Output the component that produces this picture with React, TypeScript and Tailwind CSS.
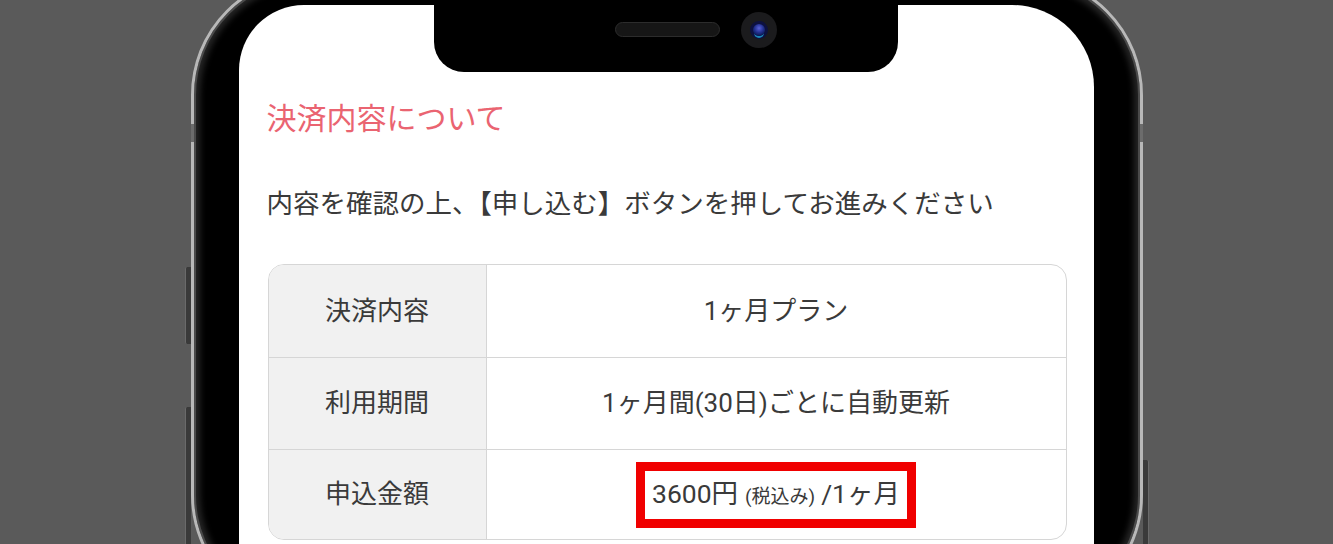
const rows = [
  { label: "決済内容", value: "1ヶ月プラン", h: "h-[92px]" },
  { label: "利用期間", value: "1ヶ月間(30日)ごとに自動更新", h: "h-[91px]" },
];

function PriceCell() {
  return (
    <span className="inline-flex items-baseline border-[9px] border-[#f00000] px-[7px] leading-[45px]">
      <span className="text-[26.5px]">3600円</span>
      <span className="ml-[7px] text-[19px]">(税込み)</span>
      <span className="ml-[6px] text-[26.5px]">/1ヶ月</span>
    </span>
  );
}

export default function App() {
  return (
    <div
      className="flex h-[544px] w-full justify-center overflow-hidden bg-[#5a5a5a]"
      style={{ fontFamily: "Roboto, 'Noto Sans CJK JP', sans-serif" }}
    >
      {/* phone body */}
      <div className="relative mt-[-25px] h-[640px] w-[952px] shrink-0 rounded-[120px] border-[3px] border-[#b8b8b8] bg-black pl-[45px] pr-[46px] pt-[27px] shadow-[inset_0_0_0_2px_#4a4a4a,inset_0_0_6px_6px_#262626]">
        {/* side buttons */}
        <div className="absolute left-[-9px] top-[289px] h-[77px] w-[6px] rounded-l-[2px] bg-[#3a3a3a] border-l border-[#6a6a6a]" />
        <div className="absolute left-[-9px] top-[429px] h-[200px] w-[6px] rounded-l-[2px] bg-[#3a3a3a] border-l border-[#6a6a6a]" />
        <div className="absolute right-[-9px] top-[482px] h-[200px] w-[6px] rounded-r-[2px] bg-[#3a3a3a] border-r border-[#6a6a6a]" />
        <div className="absolute left-[-3px] top-[146px] h-[18px] w-[3px] bg-[#6c6c6c]" />
        <div className="absolute right-[-3px] top-[146px] h-[18px] w-[3px] bg-[#6c6c6c]" />

        {/* screen */}
        <div className="relative h-full rounded-tl-[65px] rounded-tr-[82px] bg-white pl-[28px] text-[#3a3a3a]">
          {/* notch */}
          <div className="absolute left-[195px] top-0 h-[67px] w-[464px] rounded-b-[30px] bg-black">
            <div className="absolute left-[181px] top-[17px] h-[15px] w-[105px] rounded-full border border-[#2c2c2c] bg-[#161616]" />
            <div className="absolute left-[307px] top-[7px] flex h-[36px] w-[36px] items-center justify-center rounded-full bg-[#1b1b1d]">
              <div className="flex h-[18px] w-[18px] items-center justify-center rounded-full bg-[#0d1140]">
                <div className="h-[12px] w-[12px] rounded-full bg-[radial-gradient(circle_at_50%_35%,#5a62d8_0%,#22308f_45%,#0b1a55_75%)] shadow-[0_3px_0_-1px_#1a86b8]" />
              </div>
            </div>
          </div>

          <h2 className="pt-[91px] text-[30px] font-normal leading-[45px] text-[#ea6471]">
            決済内容について
          </h2>
          <p className="mt-[43px] text-[26.5px] leading-[40px]">
            内容を確認の上、【申し込む】ボタンを押してお進みください
          </p>

          <div className="ml-px mt-[40px] w-[799px] overflow-hidden rounded-[16px] border border-[#d6d6d6]">
            {rows.map((r) => (
              <div key={r.label} className="grid grid-cols-[218px_1fr] border-b border-[#d6d6d6]">
                <div className={`flex ${r.h} items-center justify-center border-r border-[#d6d6d6] bg-[#f1f1f1] text-[26px]`}>
                  {r.label}
                </div>
                <div className={`flex ${r.h} items-center justify-center text-[26px]`}>{r.value}</div>
              </div>
            ))}
            <div className="grid grid-cols-[218px_1fr]">
              <div className="flex h-[89px] items-center justify-center border-r border-[#d6d6d6] bg-[#f1f1f1] text-[26px]">
                申込金額
              </div>
              <div className="flex h-[89px] items-center justify-center">
                <PriceCell />
              </div>
            </div>
          </div>
        </div>
      </div>
    </div>
  );
}
